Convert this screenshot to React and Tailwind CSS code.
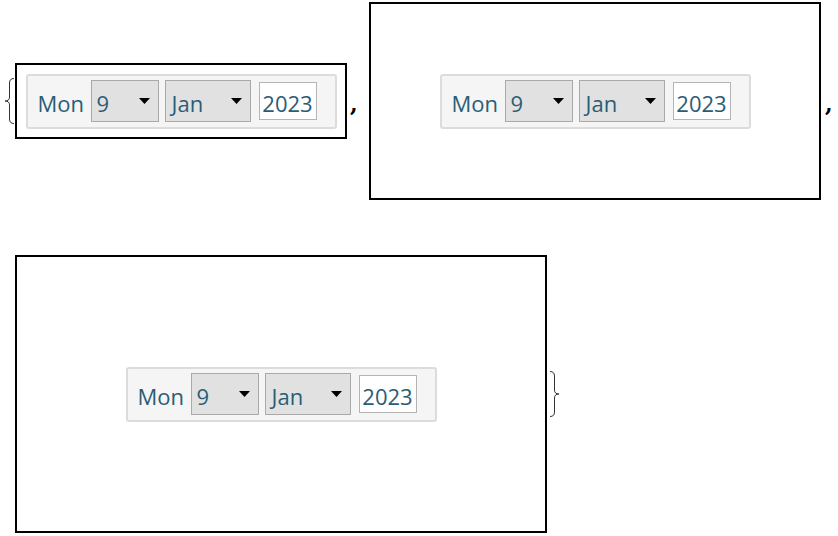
import React from "react";

const Triangle = () => (
  <svg width="11" height="6" viewBox="0 0 11 6" className="shrink-0">
    <polygon points="0,0 11,0 5.5,6" fill="#000" />
  </svg>
);

const Picker = () => (
  <div className="flex h-[55px] w-[311px] shrink-0 items-center rounded-[3px] border-2 border-[#dcdcdc] bg-[#f5f5f5] pl-[10px] font-['Open_Sans',sans-serif] text-[22px] leading-none text-[#2a5d75]">
    <span className="w-[53px] shrink-0 pt-[4px]">Mon</span>
    <div className="flex h-[42px] w-[68px] shrink-0 items-center justify-between border border-[#a9a9a9] bg-[#e1e1e1] pl-[5px] pr-[8px]">
      <span className="pt-[4px]">9</span>
      <Triangle />
    </div>
    <div className="ml-[6px] flex h-[42px] w-[86px] shrink-0 items-center justify-between border border-[#a9a9a9] bg-[#e1e1e1] pl-[6px] pr-[8px]">
      <span className="pt-[4px]">Jan</span>
      <Triangle />
    </div>
    <div className="ml-[8px] flex h-[38px] w-[58px] shrink-0 items-center justify-center border border-[#b4b4b4] bg-white">
      <span className="pt-[4px]">2023</span>
    </div>
  </div>
);

const Brace = ({ flip }) => (
  <svg width="11" height="46" viewBox="0 0 11 46" className={flip ? "shrink-0 -scale-x-100" : "shrink-0"}>
    <path
      d="M10,0.5 Q5.5,0.5 5.5,5 L5.5,19 Q5.5,23 1,23 Q5.5,23 5.5,27 L5.5,41 Q5.5,45.5 10,45.5"
      fill="none"
      stroke="#333"
      strokeWidth="1"
    />
  </svg>
);

export default function App() {
  return (
    <div className="h-[536px] w-[838px] bg-white">
      <div className="box-content flex h-[198px] items-center pl-[4px] pt-[2px]">
        <Brace />
        <div className="flex h-[76px] w-[332px] shrink-0 items-center justify-center border-2 border-black">
          <Picker />
        </div>
        <span className="w-[22px] shrink-0 self-center pl-[3px] pt-[6px] font-['DejaVu_Serif',serif] text-[22px] font-bold leading-none text-black">
          ,
        </span>
        <div className="flex h-[198px] w-[452px] shrink-0 items-center justify-center border-2 border-black">
          <Picker />
        </div>
        <span className="w-[12px] shrink-0 self-center pl-[4px] pt-[6px] font-['DejaVu_Serif',serif] text-[22px] font-bold leading-none text-black">
          ,
        </span>
      </div>
      <div className="mt-[55px] flex items-center pl-[15px]">
        <div className="flex h-[278px] w-[532px] shrink-0 items-center justify-center border-2 border-black">
          <Picker />
        </div>
        <div className="ml-[2px] flex">
          <Brace flip />
        </div>
      </div>
    </div>
  );
}
